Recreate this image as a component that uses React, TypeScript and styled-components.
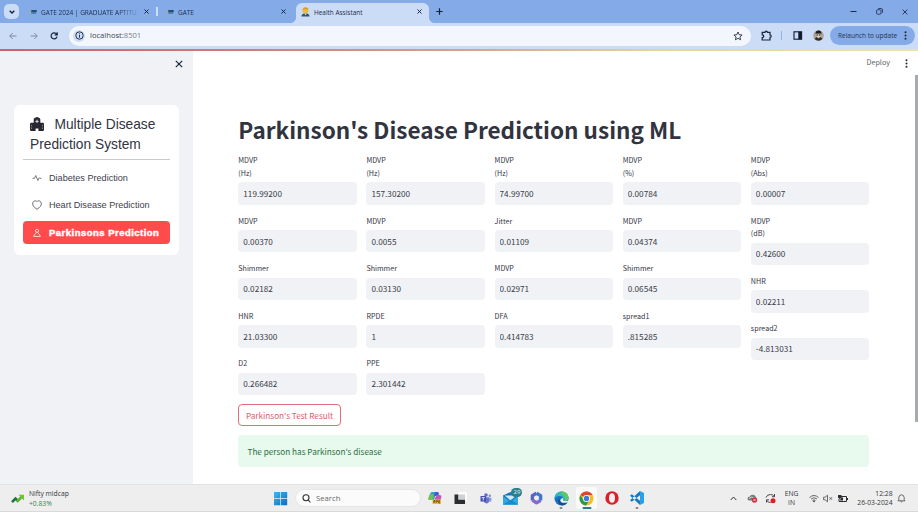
import React from 'react';
import styled, { createGlobalStyle, css } from 'styled-components';

const source = '"Noto Sans CJK SC", "Open Sans", sans-serif';
const ui = '"Open Sans", "Noto Sans", sans-serif';
const arial = '"Liberation Sans", Arial, sans-serif';

const GlobalStyle = createGlobalStyle`
  *, *::before, *::after { box-sizing: border-box; }
  html, body { margin: 0; padding: 0; overflow: hidden; background: #fff; }
  body { font-family: ${ui}; }
  svg { display: block; flex: none; }
  button, input { font: inherit; margin: 0; }
`;

const Screen = styled.div`
  width: 918px;
  height: 512px;
  display: flex;
  flex-direction: column;
  overflow: hidden;
`;

/* Browser frame */
const TabStrip = styled.header`
  height: 23px;
  flex: none;
  display: flex;
  background: #84abe8;
  color: #1d2b48;
`;
const TabSearch = styled.div`
  width: 15px;
  height: 15px;
  margin: 4px 4px 0 4px;
  border-radius: 5px;
  background: #cbdcf6;
  display: grid;
  place-items: center;
`;
const Tab = styled.div<{ $width: number; $end?: number; $active?: boolean }>`
  position: relative;
  width: ${p => p.$width}px;
  height: 20px;
  margin-top: 3px;
  padding: 0 ${p => p.$end ?? 7}px 3px 5px;
  display: flex;
  align-items: center;
  font-size: 6.45px;
  white-space: nowrap;
  ${p => p.$active && css`
    background: #cbdcf6;
    border-radius: 6px 6px 0 0;
    &::before, &::after {
      content: '';
      position: absolute;
      bottom: 0;
      width: 5px;
      height: 5px;
    }
    &::before { left: -5px; background: radial-gradient(circle at 0 0, transparent 4.6px, #cbdcf6 5px); }
    &::after { right: -5px; background: radial-gradient(circle at 100% 0, transparent 4.6px, #cbdcf6 5px); }
  `}
`;
const TabTitle = styled.span<{ $fade?: boolean; $spacing?: number }>`
  flex: 1;
  min-width: 0;
  margin: 0 4px 0 4px;
  padding-top: 1px;
  letter-spacing: ${p => p.$spacing ?? 0}px;
  ${p => p.$fade && css`mask-image: linear-gradient(90deg, #000 78%, rgba(0, 0, 0, 0.25) 95%);`}
`;
const TabDivider = styled.i`
  width: 2px;
  height: 9px;
  margin-top: 7px;
  background: #cbdcf6;
`;
const NewTab = styled.div`
  width: 21px;
  height: 23px;
  display: grid;
  place-items: center;
`;
const WindowButtons = styled.div`
  margin-left: auto;
  padding-right: 10px;
  display: flex;
  align-items: center;
  gap: 19px;
`;
const Toolbar = styled.nav`
  height: 26px;
  flex: none;
  display: flex;
  align-items: center;
  padding: 0 3px 1px 8px;
  background: #cbdcf6;
  color: #1e2a40;
`;
const NavIcons = styled.div`
  width: 61px;
  display: flex;
  gap: 10.5px;
`;
const AddressBar = styled.div`
  width: 682px;
  height: 20px;
  display: flex;
  align-items: center;
  padding: 0 8px 0 4px;
  border-radius: 10px;
  background: #f3f7fd;
  font-size: 7.6px;
`;
const SiteInfo = styled.div`
  width: 12px;
  height: 12px;
  margin-right: 5px;
  border-radius: 50%;
  background: #cbdcf6;
  display: grid;
  place-items: center;
`;
const Url = styled.span`
  flex: 1;
  padding-bottom: 1px;
  color: #3c4350;
  em { font-style: normal; color: #767d88; }
`;
const ToolIcons = styled.div`
  flex: 1;
  display: flex;
  align-items: center;
  padding-left: 9.5px;
`;
const ToolDivider = styled.i`
  width: 1px;
  height: 9px;
  margin: 0 11px 0 9px;
  background: #94b4e8;
`;
const Relaunch = styled.button`
  width: 85px;
  height: 19px;
  padding: 0 8px 0 8px;
  border: 0;
  border-radius: 10px;
  background: #84abe8;
  color: #24344f;
  display: flex;
  align-items: center;
  justify-content: space-between;
  font-size: 6.5px;
  white-space: nowrap;
`;
const Decoration = styled.div`
  height: 2px;
  flex: none;
  background: linear-gradient(90deg, #d0606c 0%, #d27a78 25%, #d6a08c 50%, #e5d49c 72%, #e9e3ae 100%);
`;

/* Streamlit page */
const Page = styled.div`
  flex: 1;
  min-height: 0;
  display: flex;
`;
const Sidebar = styled.aside`
  width: 193px;
  flex: none;
  padding: 0 14px;
  background: #f0f2f6;
  color: #31333f;
  font-family: ${arial};
`;
const CloseRow = styled.div`
  height: 54px;
  padding: 9px 10px 0 0;
  display: flex;
  justify-content: flex-end;
  margin-right: -14px;
`;
const Menu = styled.section`
  width: 165px;
  height: 150px;
  padding: 9px 9px;
  border-radius: 6px;
  background: #fff;
`;
const MenuTitle = styled.h2`
  height: 46px;
  margin: 0 0 6px;
  padding: 1px 7px 0;
  border-bottom: 1px solid #c9cace;
  font-size: 13.75px;
  font-weight: 400;
  line-height: 20px;
  white-space: nowrap;
  svg { display: inline-block; vertical-align: -2px; margin-right: 10.5px; }
`;
const MenuItem = styled.a<{ $active?: boolean }>`
  height: 23px;
  margin-bottom: 4px;
  padding: 0 9px;
  display: flex;
  align-items: center;
  gap: 7px;
  border-radius: 4px;
  font-size: 9.1px;
  color: #3e404b;
  white-space: nowrap;
  ${p => p.$active && css`
    margin-top: 5px;
    background: #ff4b4b;
    color: #fff;
    font-size: 9.5px;
    font-weight: 700;
    letter-spacing: 0.48px;
    -webkit-text-stroke: 0.45px #fff;
  `}
`;
const Main = styled.main`
  position: relative;
  flex: 1;
  padding: 0 49px 0 45.3px;
  font-family: ${source};
  color: #31333f;
`;
const AppHeader = styled.div`
  height: 65.5px;
  margin-right: -38.5px;
  padding-top: 6px;
  display: flex;
  justify-content: flex-end;
  gap: 14.8px;
  font-size: 7.2px;
  line-height: 11px;
  color: #5d5f69;
  svg { margin-top: 1.5px; }
`;
const Title = styled.h1`
  height: 37.9px;
  margin: 0;
  font-size: 22.55px;
  font-weight: 700;
  line-height: 25px;
  white-space: nowrap;
`;
const Columns = styled.div`
  display: grid;
  grid-template-columns: repeat(5, 118.4px);
  column-gap: 9.75px;
`;
const Column = styled.div`
  display: flex;
  flex-direction: column;
  gap: 9.7px;
`;
const FieldBox = styled.label`
  display: block;
`;
const Label = styled.span`
  display: block;
  margin-bottom: 2.9px;
  font-size: 7.15px;
  line-height: 12.6px;
  white-space: pre-line;
`;
const Input = styled.input`
  display: block;
  width: 100%;
  height: 22.4px;
  padding: 0 5px 1px 5px;
  border: 0;
  border-radius: 4px;
  outline: 0;
  background: #f0f2f6;
  color: #3a3c47;
  font-size: 8.2px;
`;
const ResultButton = styled.button`
  width: 102.5px;
  height: 22px;
  margin-top: 9.2px;
  padding: 0;
  display: block;
  border: 1px solid #dc6f77;
  border-radius: 4px;
  background: #fff;
  color: #d9606a;
  font-size: 8.2px;
  line-height: 19px;
  white-space: nowrap;
`;
const Success = styled.div`
  width: 630.7px;
  height: 31.4px;
  margin-top: 9.2px;
  padding: 0 9.2px 1px;
  display: flex;
  align-items: center;
  border-radius: 4px;
  background: #e8f9ee;
  color: #2b7040;
  font-size: 8.2px;
`;
const ScrollThumb = styled.i`
  position: absolute;
  right: 0;
  top: 24px;
  width: 3px;
  height: 347px;
  background: #a9a9b0;
`;

/* Windows taskbar */
const Taskbar = styled.footer`
  height: 28px;
  flex: none;
  display: flex;
  align-items: center;
  border-top: 1px solid #e3e3e4;
  border-bottom: 1px solid #d9d9da;
  background: #eeeeee;
  color: #34363a;
  font-size: 6.75px;
  line-height: 9.4px;
`;
const Widget = styled.div`
  width: 273px;
  padding: 1px 0 0 11px;
  display: flex;
  align-items: center;
  gap: 4px;
  span { display: block; }
  span + span { color: #2f8545; }
`;
const SearchBox = styled.div`
  width: 126px;
  height: 18px;
  margin: 0 3.5px 0 7px;
  padding: 1px 0 0 6px;
  display: flex;
  align-items: center;
  gap: 5px;
  border-radius: 9px;
  border: 1px solid #e6e6e6;
  background: #fbfbfb;
  color: #66686b;
  font-size: 7.7px;
`;
const Apps = styled.div`
  display: flex;
  align-items: center;
  height: 26px;
`;
const AppSlot = styled.div<{ $active?: boolean; $running?: boolean }>`
  position: relative;
  width: 21px;
  height: 22px;
  margin-right: 4.3px;
  display: grid;
  place-items: center;
  border-radius: 3px;
  background: ${p => (p.$active ? '#fafafa' : 'transparent')};
  ${p => (p.$active || p.$running) && css`
    &::after {
      content: '';
      position: absolute;
      bottom: 0;
      left: 50%;
      width: ${p.$active ? 9 : 3}px;
      height: 2px;
      transform: translateX(-50%);
      border-radius: 1px;
      background: ${p.$active ? '#2a7d8a' : '#85878a'};
    }
  `}
`;
const Badge = styled.b`
  position: absolute;
  top: 1px;
  right: -1px;
  width: 11px;
  height: 9px;
  border-radius: 5px;
  background: #2b7f8c;
  color: #e5f3f5;
  font-size: 6px;
  font-weight: 400;
  line-height: 9px;
  text-align: center;
`;
const Tray = styled.div`
  margin-left: auto;
  padding-right: 12px;
  display: flex;
  align-items: center;
`;
const Language = styled.div`
  width: 22px;
  margin: 0 6.5px 0 5px;
  text-align: center;
`;
const Clock = styled.div`
  width: 40px;
  margin: 0 4.5px 0 5px;
  text-align: right;
  white-space: nowrap;
`;
const Spaced = styled.span<{ $right: number }>`
  margin-right: ${p => p.$right}px;
`;

const Cross = ({ size, weight = 1.15 }: { size: number; weight?: number }) => (
  <svg width={size} height={size} viewBox="0 0 6 6" stroke="#14203a" strokeWidth={weight}>
    <path d="M.6 .6 5.4 5.4M5.4 .6 .6 5.4" />
  </svg>
);
const Dots = ({ size = 9 }: { size?: number }) => (
  <svg width="3" height={size} viewBox="0 0 3 9" fill="#26282e">
    <circle cx="1.5" cy="1.3" r="1" /><circle cx="1.5" cy="4.5" r="1" /><circle cx="1.5" cy="7.7" r="1" />
  </svg>
);
const GateIcon = () => (
  <svg width="9" height="7" viewBox="0 0 9 7">
    <path d="M2.500 1.500Q.5 3.700 2.500 6" stroke="#a5ad86" fill="none" />
    <rect x="3.200" y="2" width="5.600" height="2.200" rx=".6" fill="#234f78" />
    <rect x="3.200" y="4.200" width="5" height="1.600" rx=".5" fill="#3f7799" />
  </svg>
);
const PersonIcon = () => (
  <svg width="9" height="10" viewBox="0 0 9 10">
    <path d="M.4 9.600Q.5 6.600 4.500 6.300 8.500 6.600 8.600 9.600Z" fill="#2b5967" />
    <path d="M3.400 6.400 4.500 8.200 5.600 6.400Z" fill="#e9f2f7" />
    <circle cx="4.500" cy="3.400" r="2.900" fill="#f1b83a" />
    <path d="M1.600 3.200Q2 .3 4.500 .3T7.400 3.200L6 2.200H3Z" fill="#dc9a25" />
  </svg>
);
const HospitalIcon = () => (
  <svg width="14" height="14" viewBox="0 0 14 14" fill="#262730">
    <path d="M3.700 2.200Q3.900 1.500 4.600 1.100L6.200 .2Q7 -.1 7.800 .2L9.400 1.100Q10.100 1.500 10.300 2.200V14H8.400V11.400H5.600V14H3.700Z" />
    <path d="M0 7.200Q0 5.800 1.400 5.800H4.200V14H1.200Q0 14 0 12.800ZM9.800 5.800H12.600Q14 5.800 14 7.200V12.800Q14 14 12.800 14H9.800Z" />
    <path d="M7 2.700V6.100M5.300 4.400H8.700" stroke="#e9eaed" strokeWidth=".9" />
    <path d="M1.600 7.800V12.300M12.400 7.800V12.300" stroke="#8b8d95" strokeWidth=".9" strokeDasharray="1.600 1" />
  </svg>
);

type FieldData = [label: string, value: string];
const columns: FieldData[][] = [
  [['MDVP\n(Hz)', '119.99200'], ['MDVP', '0.00370'], ['Shimmer', '0.02182'], ['HNR', '21.03300'], ['D2', '0.266482']],
  [['MDVP\n(Hz)', '157.30200'], ['MDVP', '0.0055'], ['Shimmer', '0.03130'], ['RPDE', '1'], ['PPE', '2.301442']],
  [['MDVP\n(Hz)', '74.99700'], ['Jitter', '0.01109'], ['MDVP', '0.02971'], ['DFA', '0.414783']],
  [['MDVP\n(%)', '0.00784'], ['MDVP', '0.04374'], ['Shimmer', '0.06545'], ['spread1', '.815285']],
  [['MDVP\n(Abs)', '0.00007'], ['MDVP\n(dB)', '0.42600'], ['NHR', '0.02211'], ['spread2', '-4.813031']],
];

const Field = ({ label, value }: { label: string; value: string }) => (
  <FieldBox>
    <Label>{label}</Label>
    <Input defaultValue={value} />
  </FieldBox>
);

const Browser = () => (
  <>
    <TabStrip>
      <TabSearch>
        <svg width="6" height="4" viewBox="0 0 6 4" fill="none" stroke="#14203a" strokeWidth="1.3"><path d="M.7 .7 3 3 5.300 .7" /></svg>
      </TabSearch>
      <Tab $width={133}><GateIcon /><TabTitle $fade $spacing={0}>GATE 2024 | GRADUATE APTITU</TabTitle><Cross size={5} /></Tab>
      <TabDivider />
      <Tab $width={138} $end={10.5}><Spaced $right={2} /><GateIcon /><TabTitle>GATE</TabTitle><Cross size={5} /></Tab>
      <Tab $width={133} $active><PersonIcon /><TabTitle>Health Assistant</TabTitle><Cross size={5} /></Tab>
      <NewTab>
        <svg width="7" height="7" viewBox="0 0 7 7" stroke="#14203a" strokeWidth="1.2"><path d="M3.500 .3V6.700M.3 3.500H6.700" /></svg>
      </NewTab>
      <WindowButtons>
        <svg width="7" height="7" viewBox="0 0 7 7" stroke="#1d2b48"><path d="M.5 3.500H6.500" /></svg>
        <svg width="7" height="7" viewBox="0 0 7 7" fill="none" stroke="#1d2b48" strokeWidth=".8"><rect x=".6" y="1.800" width="4.400" height="4.400" rx="1" /><path d="M2 1.300Q2.200 .5 3 .5H5Q6.500 .5 6.500 2V4Q6.400 4.800 5.700 5" /></svg>
        <Cross size={6} weight={0.8} />
      </WindowButtons>
    </TabStrip>
    <Toolbar>
      <NavIcons>
        <svg width="10" height="10" viewBox="0 0 10 10" fill="none" stroke="#7c8aa5" strokeWidth="1"><path d="M8.500 5H1.800M4.700 2 1.700 5l3 3" /></svg>
        <svg width="10" height="10" viewBox="0 0 10 10" fill="none" stroke="#7c8aa5" strokeWidth="1"><path d="M1.500 5H8.200M5.300 2l3 3-3 3" /></svg>
        <svg width="10" height="10" viewBox="0 0 10 10" fill="none" stroke="#17233b" strokeWidth="1.200"><path d="M7.600 3.200A3 3 0 1 0 8 5.600M8.200 1.300V3.800H5.700" /></svg>
      </NavIcons>
      <AddressBar>
        <SiteInfo>
          <svg width="9" height="9" viewBox="0 0 9 9" fill="none" stroke="#27364f"><circle cx="4.500" cy="4.500" r="3.700" /><path d="M4.500 4V6.700M4.500 2.300v1" /></svg>
        </SiteInfo>
        <Url>localhost:<em>8501</em></Url>
        <svg width="10" height="10" viewBox="0 0 10 10" fill="none" stroke="#27303f" strokeWidth=".9"><path d="M5 1 6.200 3.700 9.100 4 6.900 5.900 7.600 8.800 5 7.300 2.400 8.800 3.100 5.900 .9 4 3.800 3.700Z" /></svg>
      </AddressBar>
      <ToolIcons>
        <svg width="11" height="11" viewBox="0 0 11 11" fill="none" stroke="#18243a" strokeWidth="1.200"><path d="M1.200 2.300H4A1.200 1.200 0 0 1 6.400 2.300H9V5A1.200 1.200 0 0 1 9 7.400V10H1.200V7.600Q2.800 7.500 2.800 6.200T1.200 4.800Z" /></svg>
        <ToolDivider />
        <svg width="10" height="9" viewBox="0 0 10 9"><rect x="1" y=".8" width="7.600" height="7.400" fill="none" stroke="#101a2c" strokeWidth="1.100" /><path d="M5.300 .8H8.600V8.200H5.300Z" fill="#101a2c" /></svg>
        <Spaced $right={10} />
        <svg width="11" height="11" viewBox="0 0 11 11"><circle cx="5.500" cy="5.500" r="5.300" fill="#aaa397" /><path d="M2.500 4Q2.500 .6 5.500 .6T8.500 4L7.500 3.500H3.500Z" fill="#1e1c1c" /><path d="M3.500 4.200h4v2.200L5.500 8 3.500 6.400Z" fill="#e2cdbb" /><path d="M1.500 9 3.500 7 5.500 8.500 7.500 7 9.500 9Q5.500 12.500 1.500 9Z" fill="#2e2c2c" /><path d="M3.500 5h1.600M5.900 5h1.600" stroke="#222" /></svg>
      </ToolIcons>
      <Relaunch>Relaunch to update<Dots size={9} /></Relaunch>
    </Toolbar>
    <Decoration />
  </>
);

const SideMenu = () => (
  <Sidebar>
    <CloseRow><Cross size={8} weight={0.85} /></CloseRow>
    <Menu>
      <MenuTitle><HospitalIcon />Multiple Disease<br />Prediction System</MenuTitle>
      <MenuItem>
        <svg width="10" height="10" viewBox="0 0 16 16" fill="none" stroke="currentColor" strokeWidth="1.100" strokeLinejoin="round"><path d="M1 8.500H4L6 4 9.500 12 11.500 7.500 12.500 8.500H15" /></svg>
        Diabetes Prediction
      </MenuItem>
      <MenuItem>
        <svg width="10" height="10" viewBox="0 0 16 16" fill="none" stroke="currentColor" strokeWidth="1.200"><path d="M8 14.800C-5 7 3.500-2.500 8 2.800 12.500-2.500 21 7 8 14.800Z" /></svg>
        Heart Disease Prediction
      </MenuItem>
      <MenuItem $active>
        <svg width="10" height="10" viewBox="0 0 16 16" fill="none" stroke="currentColor" strokeWidth="1.200"><circle cx="8" cy="4.500" r="2.500" /><path d="M6.800 7 5.800 9.200Q3 10 2.800 13.500H13.200Q13 10 10.200 9.200L9.200 7" /></svg>
        Parkinsons Prediction
      </MenuItem>
    </Menu>
  </Sidebar>
);

const WindowsBar = () => (
  <Taskbar>
    <Widget>
      <svg width="14" height="10" viewBox="0 0 14 10" fill="none"><path d="M1 8.200 4.500 4.500 7.500 7.500" stroke="#1d7440" strokeWidth="2.600" /><path d="M6 7.500 11 2.800" stroke="#5bb531" strokeWidth="2.600" /><path d="M7.500 .8H13V6.500Z" fill="#6cc52c" /></svg>
      <div><span>Nifty midcap</span><span>+0.83%</span></div>
    </Widget>
    <svg width="15" height="15" viewBox="0 0 15 15"><defs><linearGradient id="win" x2="1" y2="1"><stop stopColor="#3fb7ee" /><stop offset="1" stopColor="#0a6cc4" /></linearGradient></defs><path d="M1 1H7.200V7.200H1ZM7.900 1h6.300V7.200H7.900ZM1 7.900H7.200v6.300H1ZM7.900 7.900h6.300v6.300H7.900Z" fill="url(#win)" /></svg>
    <SearchBox>
      <svg width="9" height="9" viewBox="0 0 9 9" fill="none" stroke="#303236" strokeWidth="1.100"><circle cx="4" cy="3.700" r="3" /><path d="M6.100 5.900 8.500 8.500" /></svg>
      Search
    </SearchBox>
    <Apps>
      <AppSlot>
        <svg width="14" height="14" viewBox="0 0 14 14"><path d="M4 1h4.500L6 9H1.500Q0 9 .5 7L2 3Q2.500 1 4 1Z" fill="#2aa5d6" /><path d="M.5 7 2 3 6 3.500 4.500 9H1.500Q0 9 .5 7Z" fill="#7abf4a" /><path d="M7 1h2.500Q11 1 11 3L10 5H6Z" fill="#3d5ed0" /><path d="M8.500 4H12Q14 4.300 13.300 6.500L12 11H5.500Z" fill="#c557ba" /><path d="M4.500 8.500H13V13H4.500Z" fill="#f3bc2d" /><path d="M5.800 12V9.600H7.100V11H5.800M8.300 12V9.600H9.500V11M10.700 9.600V12H12M10.700 9.600H12M10.700 10.800H12" stroke="#382d22" strokeWidth=".6" fill="none" /></svg>
      </AppSlot>
      <AppSlot>
        <svg width="13" height="12" viewBox="0 0 13 12"><path d="M4 0h9v9H4Z" fill="#fcfcfc" /><path d="M.5 2.500H4.500V7.500H11V12H.5Z" fill="#2c2d30" /><path d="M4.500 2.500H11V7.500H4.500Z" fill="#cfd0d2" /></svg>
      </AppSlot>
      <AppSlot>
        <svg width="13" height="13" viewBox="0 0 13 13"><circle cx="7" cy="3" r="1.800" fill="#626dc8" /><circle cx="10.800" cy="3.700" r="1.200" fill="#7d87d8" /><path d="M5 5.300h5V9.500Q9.500 11.500 7.500 11.500T5 9.500Z" fill="#6974cf" /><path d="M10 5.700h2.400V8.500Q12 10 10 9.600Z" fill="#8b94df" /><rect x="1.500" y="4" width="5.500" height="5.500" rx=".6" fill="#4650b4" /><path d="M2.800 5.600h2.900M4.250 5.600v2.700" stroke="#fff" strokeWidth=".8" /></svg>
      </AppSlot>
      <AppSlot>
        <svg width="15" height="14" viewBox="0 0 15 14"><path d="M0 4.500 7.500 1 15 4.500V13.500H0Z" fill="#1674b9" /><path d="M0 5 7.500 10.500 15 5V13.500H0Z" fill="#33a9e4" /><path d="M1.500 4.500H13.500L7.500 9.500Z" fill="#cfe9f7" /><path d="M0 13.500 8 8.500 15 13.500Z" fill="#168ccf" /></svg>
        <Badge>29</Badge>
      </AppSlot>
      <AppSlot>
        <svg width="13" height="14" viewBox="0 0 13 14" fill="none" strokeWidth="3.400" strokeLinejoin="round"><path d="M6.500 2.200 2.400 4.600V9.500" stroke="#5b65bd" /><path d="M2.400 9 6.500 11.800 10.600 9.500" stroke="#8a68cc" /><path d="M10.600 9.500V4.600L6.500 2.200" stroke="#3f77cf" /></svg>
      </AppSlot>
      <AppSlot $running>
        <svg width="15" height="15" viewBox="0 0 15 15"><circle cx="7.500" cy="7.500" r="7" fill="#1674c6" /><path d="M.7 7Q1.500 .5 7.500 .5 14 .8 14.500 7 14.500 10 11 10 8.500 10 9.200 8 9 5.200 6 5 2.500 4.800 .7 7Z" fill="#39b9b6" /><path d="M7.500 .5Q14 .8 14.500 7 14.500 10 11 10 13 6 7.500 3Z" fill="#62c85e" /><path d="M5.500 7.500Q5.300 11.800 10 12.300 12 12.500 13.500 11.300 11.500 14.500 8 14.500 4 13.500 3.800 9.800 4 8 5.500 7.500Z" fill="#154f91" /><path d="M9.200 8Q8.500 10 11 10H14.300L13.500 11.300Q7 13 6.300 9.500 6.300 7.500 8.500 6.900 9.200 7.200 9.200 8Z" fill="#eee" /></svg>
      </AppSlot>
      <AppSlot $active>
        <svg width="15" height="15" viewBox="0 0 15 15"><circle cx="7.500" cy="7.500" r="7" fill="#f5bf24" /><path d="M7.500 7.500 1.400 4A7 7 0 0 1 13.600 4H7.500Z" fill="#de4436" /><path d="M1.400 4A7 7 0 0 0 7 14.500L10.500 9.200 4.500 9.200Z" fill="#2d9a4c" /><circle cx="7.500" cy="7.500" r="3.500" fill="#fff" /><circle cx="7.500" cy="7.500" r="2.700" fill="#397de0" /></svg>
      </AppSlot>
      <AppSlot>
        <svg width="14" height="14" viewBox="0 0 14 14"><circle cx="7" cy="7" r="6.700" fill="#d91f2d" /><ellipse cx="7" cy="7" rx="3" ry="4.700" fill="#f4eeee" /></svg>
      </AppSlot>
      <AppSlot $running>
        <svg width="14" height="14" viewBox="0 0 14 14"><path d="M10 0 14 2V12L10 14Z" fill="#2ba0e5" /><path d="M10 0V4.200L1.800 10.700 0 9.300ZM10 14V9.800L1.800 3.300 0 4.700Z" fill="#137ac4" /></svg>
      </AppSlot>
    </Apps>
    <Tray>
      <Spaced $right={9.5}><svg width="7" height="5" viewBox="0 0 7 5" fill="none" stroke="#34363a"><path d="M.7 4 3.500 1 6.300 4" /></svg></Spaced>
      <Spaced $right={7}><svg width="11" height="10" viewBox="0 0 11 10"><path d="M2 7.500Q0 7 .6 5 1 3.800 2.500 3.800 3.500 1.500 6 1.800 8.500 2 9 4.500V7.500Z" fill="#777b80" /><path d="M2 5.500Q4 3 8 5" stroke="#d7d9db" fill="none" /><circle cx="7.500" cy="7" r="2.700" fill="#cf3340" /><path d="M6.500 6l2 2M8.500 6l-2 2" stroke="#fff" strokeWidth=".6" /></svg></Spaced>
      <svg width="11" height="11" viewBox="0 0 11 11" fill="none" stroke="#45474b" strokeWidth="1"><path d="M1 4.500Q2 1.500 5.500 1.500 8 1.600 9.300 3.500M9.500 1V3.700H7M1.500 9.500V6.800H4M1.500 7.200Q3 9.500 5.500 9.500" /><circle cx="8" cy="7.700" r="2.500" fill="#e11b23" stroke="none" /></svg>
      <Language>ENG<br />IN</Language>
      <Spaced $right={4}><svg width="10" height="9" viewBox="0 0 10 9" fill="none" stroke="#55575b" strokeWidth=".9"><path d="M.5 3.500Q5 -.5 9.500 3.500M2 5Q5 2.500 8 5M3.500 6.500Q5 5.300 6.500 6.500" /><circle cx="5" cy="7.400" r=".6" fill="#55575b" /></svg></Spaced>
      <Spaced $right={3.5}><svg width="10" height="9" viewBox="0 0 10 9" fill="none" stroke="#45474b" strokeWidth=".8"><path d="M.6 3.200H2.200L4.500 1.200V7.800L2.200 5.800H.6ZM6.500 3.200 9 5.800M9 3.200 6.500 5.800" /></svg></Spaced>
      <svg width="11" height="9" viewBox="0 0 11 9"><path d="M3 2.500H9.500V7.500H2V5" fill="none" stroke="#2c2e32" strokeWidth="1" /><path d="M4 3.500H6V6.500H3Z" fill="#2c2e32" /><path d="M10 4H11V6H10ZM1 1h3.500V3.500L2.500 5 1 3.500Z" fill="#2c2e32" /></svg>
      <Clock>12:28<br />26-03-2024</Clock>
      <svg width="9" height="9" viewBox="0 0 9 9" fill="none" stroke="#45474b" strokeWidth=".8"><path d="M1 6.800 1.800 5.500V3.600Q2 1 4.500 .8 7 1 7.200 3.600V5.500L8 6.800ZM3.500 7.300Q4.500 8.800 5.500 7.300" /></svg>
    </Tray>
  </Taskbar>
);

export default function App() {
  return (
    <Screen>
      <GlobalStyle />
      <Browser />
      <Page>
        <SideMenu />
        <Main>
          <AppHeader><span>Deploy</span><Dots /></AppHeader>
          <Title>Parkinson's Disease Prediction using ML</Title>
          <Columns>
            {columns.map((fields, c) => (
              <Column key={c}>
                {fields.map(([label, value]) => <Field key={label + value} label={label} value={value} />)}
              </Column>
            ))}
          </Columns>
          <ResultButton>Parkinson's Test Result</ResultButton>
          <Success>The person has Parkinson's disease</Success>
          <ScrollThumb />
        </Main>
      </Page>
      <WindowsBar />
    </Screen>
  );
}
